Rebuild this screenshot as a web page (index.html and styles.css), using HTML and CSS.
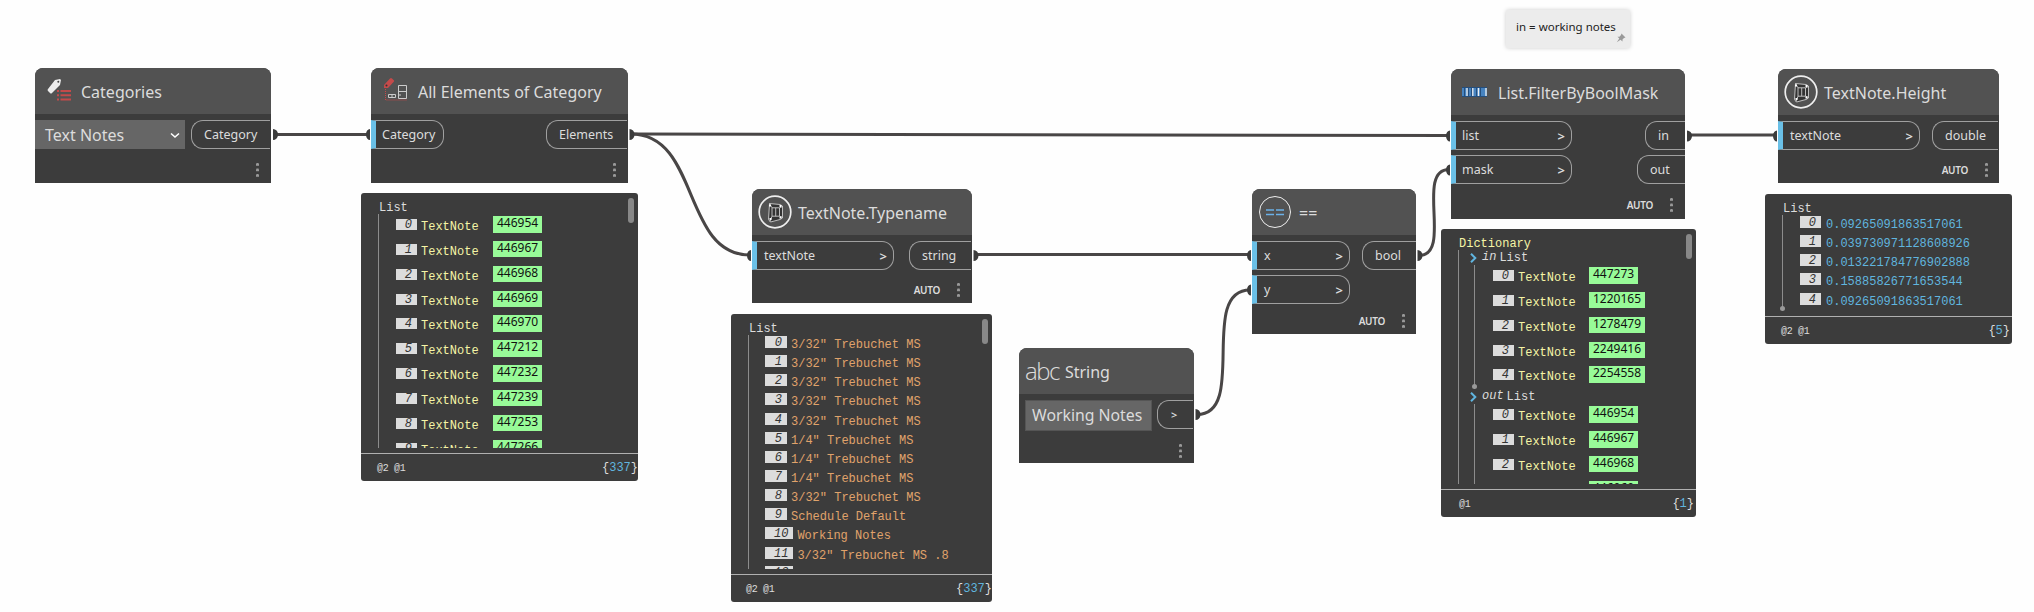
FILE: index.html
```
<!DOCTYPE html>
<html lang="en"><head><meta charset="utf-8"><title>Graph</title><link rel="stylesheet" href="styles.css"></head>
<body><main class="canvas">

<svg class="wires" width="2034" height="612" viewBox="0 0 2034 612">
<g class="wire">
<path d="M273 134.500H369"/>
<path d="M631 134L1449 135.500"/>
<path d="M631 134C700 134 682 255 750 255"/>
<path d="M975 254.500H1250"/>
<path d="M1197 414.500C1248 414.500 1198 290 1250 290"/>
<path d="M1419 255.500C1453 255.500 1415 169.500 1449 169.500"/>
<path d="M1688 135H1776"/>
</g>
<g class="caps">
<path d="M273 129a5 5.500 0 0 1 0 11zM629.500 129a5 5.500 0 0 1 0 11zM973.500 250a5 5.500 0 0 1 0 11zM1195.500 409a5 5.500 0 0 1 0 11zM1417.500 250a5 5.500 0 0 1 0 11zM1687 130.500a5 5.500 0 0 1 0 11z"/>
<path d="M370 129a4 5.500 0 0 0 0 11zM751 250a4 5.500 0 0 0 0 11zM1251 250a4 5.500 0 0 0 0 11zM1251 284.500a4 5.500 0 0 0 0 11zM1450 130.500a4 5.500 0 0 0 0 11zM1450 164.500a4 5.500 0 0 0 0 11zM1777 130.500a4 5.500 0 0 0 0 11z"/>
</g>
</svg>

<aside class="note"><span>in = working notes</span>
<svg class="pin" width="10" height="10" viewBox="0 0 10 10"><path d="M5.500 .5L9.500 4.500L8 5L6.500 6.500V8.500L4.500 6.700L.8 9.300L3.300 5.500L1.500 3.700H3.500L5 2z"/></svg></aside>

<section class="node n-categories">
<header><svg class="icon" width="28" height="28" viewBox="0 0 28 28"><path fill="#ececec" d="M3 12L10 3l5-1 1 1-1 5-8 8q-1 1-2 0l-2-2q-1-1 0-2z"/><circle cx="13.300" cy="4.700" r="1" fill="#444"/><path stroke="#c44a4a" stroke-width="2" d="M12 14h2M15.500 14H26M12 18.300h2M15.500 18.300H26M12 22.600h2M15.500 22.600H26"/></svg><h2>Categories</h2></header>
<div class="ports"><div class="select"><span>Text Notes</span><svg width="10" height="7" viewBox="0 0 10 7"><path d="M1 1.500L5 5L9 1.500"/></svg></div><div class="out"><span>Category</span></div></div>
<footer><i class="dots"></i></footer></section>

<section class="node n-elements">
<header><svg class="icon" width="28" height="28" viewBox="0 0 28 28"><path fill="#c44a4a" d="M3 8L9 1.500q1-1 2 0l2 2q.5.500 0 1L7 11H3z"/><circle cx="5.500" cy="8.500" r="1" fill="#333"/><path fill="none" stroke="#c44a4a" stroke-dasharray="1 1" d="M4.500 12v11H26"/><g fill="none" stroke="#ccc"><path d="M17.500 8.500h8v13h-8zM17.500 14.500h8M7.500 17.500h7v3h-7zM11 17.500v3"/><path d="M19 17v2"/></g></svg><h2>All Elements of Category</h2></header>
<div class="ports"><div class="in"><span>Category</span></div><div class="out"><span>Elements</span></div></div>
<footer><i class="dots"></i></footer></section>

<section class="preview p-elements"><div class="body"><p class="root">List</p><ul class="ids">
<li><i>0</i><b>TextNote</b><a>446954</a></li><li><i>1</i><b>TextNote</b><a>446967</a></li><li><i>2</i><b>TextNote</b><a>446968</a></li><li><i>3</i><b>TextNote</b><a>446969</a></li><li><i>4</i><b>TextNote</b><a>446970</a></li><li><i>5</i><b>TextNote</b><a>447212</a></li><li><i>6</i><b>TextNote</b><a>447232</a></li><li><i>7</i><b>TextNote</b><a>447239</a></li><li><i>8</i><b>TextNote</b><a>447253</a></li><li><i>9</i><b>TextNote</b><a>447266</a></li></ul></div>
<span class="thumb"></span><footer><span class="levels">@2 @1</span><span class="count">{<em>337</em>}</span></footer></section>

<section class="node n-typename">
<header><svg class="icon" width="34" height="34" viewBox="0 0 34 34"><use href="#pkg"/></svg><h2>TextNote.Typename</h2></header>
<div class="ports"><div class="in"><span>textNote</span><span class="gt">&gt;</span></div><div class="out"><span>string</span></div></div>
<footer><span class="auto">AUTO</span><i class="dots"></i></footer></section>

<section class="preview p-typename"><div class="body"><p class="root">List</p><ul class="strings">
<li><i>0</i><b>3/32" Trebuchet MS</b></li><li><i>1</i><b>3/32" Trebuchet MS</b></li><li><i>2</i><b>3/32" Trebuchet MS</b></li><li><i>3</i><b>3/32" Trebuchet MS</b></li><li><i>4</i><b>3/32" Trebuchet MS</b></li><li><i>5</i><b>1/4" Trebuchet MS</b></li><li><i>6</i><b>1/4" Trebuchet MS</b></li><li><i>7</i><b>1/4" Trebuchet MS</b></li><li><i>8</i><b>3/32" Trebuchet MS</b></li><li><i>9</i><b>Schedule Default</b></li><li><i>10</i><b>Working Notes</b></li><li><i>11</i><b>3/32" Trebuchet MS .8</b></li><li><i>12</i><b>3/32" Trebuchet MS</b></li></ul></div>
<span class="thumb"></span><footer><span class="levels">@2 @1</span><span class="count">{<em>337</em>}</span></footer></section>

<section class="node n-string">
<header><span class="abc">abc</span><h2>String</h2></header>
<div class="ports"><div class="field">Working Notes</div><div class="out"><span class="gt">&gt;</span></div></div>
<footer><i class="dots"></i></footer></section>

<section class="node n-equal">
<header><svg class="icon" width="34" height="34" viewBox="0 0 34 34"><circle cx="17" cy="17" r="15.500" fill="none" stroke="#eee"/><path stroke="#6bb1e8" stroke-width="1.300" d="M8 15h8M18 15h8M8 19.500h8M18 19.500h8"/></svg><h2>==</h2></header>
<div class="ports"><div class="stack"><div class="in"><span>x</span><span class="gt">&gt;</span></div><div class="in"><span>y</span><span class="gt">&gt;</span></div></div><div class="out"><span>bool</span></div></div>
<footer><span class="auto">AUTO</span><i class="dots"></i></footer></section>

<section class="node n-filter">
<header><svg class="icon" width="25" height="10" viewBox="0 0 25 10"><path fill="#4683c0" d="M0 .5h25v9H0z"/><path stroke="#254e7c" d="M0 .5h25M0 9.500h25M2.500 1v8M6.500 1v8M9.500 1v8M14.500 1v8M18.500 1v8"/><path stroke="#eee" stroke-width="1.300" d="M5 1v8M10.800 1v8M16.500 1v8M24 1v8"/></svg><h2>List.FilterByBoolMask</h2></header>
<div class="ports"><div class="stack"><div class="in"><span>list</span><span class="gt">&gt;</span></div><div class="in"><span>mask</span><span class="gt">&gt;</span></div></div><div class="stack right"><div class="out"><span>in</span></div><div class="out"><span>out</span></div></div></div>
<footer><span class="auto">AUTO</span><i class="dots"></i></footer></section>

<section class="preview p-filter"><div class="body"><p class="root">Dictionary</p><div class="tree">
<p class="key"><svg width="7" height="10" viewBox="0 0 7 10"><path d="M1 .8L5.300 5L1 9.200"/></svg><i>in</i>List</p><ul class="ids end"><li><i>0</i><b>TextNote</b><a>447273</a></li><li><i>1</i><b>TextNote</b><a>1220165</a></li><li><i>2</i><b>TextNote</b><a>1278479</a></li><li><i>3</i><b>TextNote</b><a>2249416</a></li><li><i>4</i><b>TextNote</b><a>2254558</a></li></ul>
<p class="key"><svg width="7" height="10" viewBox="0 0 7 10"><path d="M1 .8L5.300 5L1 9.200"/></svg><i>out</i>List</p><ul class="ids"><li><i>0</i><b>TextNote</b><a>446954</a></li><li><i>1</i><b>TextNote</b><a>446967</a></li><li><i>2</i><b>TextNote</b><a>446968</a></li><li><a class="last">446969</a></li></ul></div></div>
<span class="thumb"></span><footer><span class="levels">@1</span><span class="count">{<em>1</em>}</span></footer></section>

<section class="node n-height">
<header><svg class="icon" width="34" height="34" viewBox="0 0 34 34"><g id="pkg"><circle cx="17" cy="17" r="15.800" fill="none" stroke="#eee" stroke-width="1.700"/><path fill="#333" stroke="#ccc" stroke-width=".9" d="M11.500 8.500L22 9.500l2.500 1.500v12L22 24.500L12.500 27L10.500 24.500z"/><path fill="none" stroke="#ccc" stroke-width=".9" d="M14 12.800h7.500v8.400H14zM17.700 12.800v8.400M11.500 8.500l2.500 4.300M24.500 11.500l-3 1.500M24.500 22.500l-3-1.500M12 26.500l2-5.300"/><path stroke="#fff" stroke-width="2" d="M11 10.500h2M21.500 11h2M11.500 24h2M21.500 22.500h2"/></g></svg><h2>TextNote.Height</h2></header>
<div class="ports"><div class="in"><span>textNote</span><span class="gt">&gt;</span></div><div class="out"><span>double</span></div></div>
<footer><span class="auto">AUTO</span><i class="dots"></i></footer></section>

<section class="preview p-height"><div class="body"><p class="root">List</p><ul class="numbers end"><li><i>0</i><b>0.09265091863517061</b></li><li><i>1</i><b>0.039730971128608926</b></li><li><i>2</i><b>0.013221784776902888</b></li><li><i>3</i><b>0.15885826771653544</b></li><li><i>4</i><b>0.09265091863517061</b></li></ul></div>
<footer><span class="levels">@2 @1</span><span class="count">{<em>5</em>}</span></footer></section>
</main></body></html>
```
FILE: styles.css
```
*{box-sizing:border-box}
body{margin:0;background:#fefefe;font-family:"Noto Sans","Open Sans",sans-serif;color:#dcdcdc}
h2,p,ul{margin:0;padding:0;font-weight:400;list-style:none}
.canvas{position:relative;width:2034px;height:612px;overflow:hidden}
.wires{position:absolute;left:0;top:0}
.wire{fill:none;stroke:#494646;stroke-width:3}
.caps{fill:#3c3c3c}

/* Nodes */
.node{position:absolute;display:flex;flex-direction:column;height:115px;background:#3c3c3c;border-radius:8px 8px 0 0;overflow:hidden;white-space:nowrap}
.node header{display:flex;align-items:center;height:46px;flex:none;background:#525252}
.node h2{font-size:16px;line-height:24px;padding-top:1px}
.icon{flex:none}
.ports{display:flex;justify-content:space-between;margin-top:6px;flex:none}
.stack{display:flex;flex-direction:column;gap:5px}
.right{align-items:flex-end}
.in,.out{height:29px;display:flex;align-items:center;justify-content:space-between;border:1px solid #a0a0a0;font-size:12.500px;line-height:18px}
.in{border-left:5px solid #6ac0e7;border-radius:0 12px 12px 0;padding:0 6px 0 7px}
.out{border-right:0;border-radius:12px 0 0 12px;padding-left:12px}
.gt{font-size:13px;font-weight:600}
.node footer{display:flex;align-items:center;justify-content:flex-end;flex:1;padding:7px 12px 0 0;gap:17px}
.auto{font-size:10px;font-weight:600;line-height:14px;letter-spacing:-.3px}
.dots{width:3px;height:14px;background:radial-gradient(circle at 1.500px 1.500px,#999 1.300px,transparent 1.700px) 0 0/3px 5.500px}

.n-categories{left:35px;top:68px;width:236px}
.n-categories header{padding-left:10px;gap:8px}
.n-categories .out{width:79px;margin-right:1px}
.select{width:150px;height:29px;background:#666;display:flex;align-items:center;justify-content:space-between;padding:1px 5px 0 10px;font-size:16px}
.select svg{fill:none;stroke:#fff;stroke-width:1.600}
.n-elements{left:371px;top:68px;width:257px}
.n-elements header{padding-left:10px;gap:9px}
.n-elements .in{width:73px;padding-left:6px}
.n-elements .out{width:81px;margin-right:1px}
.n-typename{left:752px;top:189px;width:220px;height:114px}
.n-typename header,.n-height header{padding-left:6px;gap:6px}
.n-typename .in{width:142px}
.n-typename .out{width:62px;margin-right:1px}
.n-string{left:1019px;top:348px;width:175px}
.n-string header{padding-left:6px;gap:6px}
.abc{font:24px/30px "Open Sans",sans-serif;font-weight:300;letter-spacing:-1.500px}
.field{width:127px;height:31px;margin-left:6px;border:1px solid #555;background:#666;font-size:15.800px;line-height:28px;padding-left:6px}
.n-string .out{width:36px;margin-right:1px;padding-left:13px}
.n-string .gt{font-size:11px}
.n-equal{left:1252px;top:189px;width:164px;height:145px}
.n-equal header{padding-left:6px;gap:7px}
.n-equal .in{width:98px}
.n-equal .out{width:54px}
.n-equal footer{padding:4px 11px 0 0}
.n-filter{left:1451px;top:69px;width:234px;height:150px}
.n-filter header{padding-left:11px;gap:11px}
.n-filter .in{width:121px;padding-left:6px}
.n-filter .out{width:40px}
.n-filter .out + .out{width:48px}
.n-height{left:1778px;top:69px;width:221px;height:114px}
.n-height .in{width:142px}
.n-height .out{width:66px;margin-right:1px}
.n-height footer{padding-right:11px}

/* Note */
.note{position:absolute;left:1506px;top:10px;width:124px;height:38px;padding:8px 0 0 10px;background:#ececec;border-radius:2px;box-shadow:0 0 4px #ccc;color:#222;font-size:11.500px;line-height:18px;white-space:nowrap}
.pin{position:absolute;right:4px;bottom:5px;fill:#999}

/* Value previews */
.preview{position:absolute;height:288px;display:flex;flex-direction:column;background:#3c3c3c;border-radius:3px;font:12px/14px "Liberation Mono",monospace;white-space:nowrap}
.body{flex:1;min-height:0;margin-bottom:5px;padding:7px 0 0 17px;overflow:hidden}
.preview footer{height:28px;flex:none;border-top:1px solid #b0b0b0;display:flex;align-items:center;justify-content:space-between;padding-left:16px}
.levels{font-size:10px;letter-spacing:-.3px;margin-top:2px}
.count em{font-style:normal;color:#60b5df}
.thumb{position:absolute;right:4px;top:5px;width:6px;height:25px;border-radius:3px;background:#888}
.root{padding-left:1px;height:14px;line-height:16px}
.preview ul{position:relative;border-left:1px solid #8c8c8c;padding-left:17px}
.preview li{display:flex;align-items:flex-start;height:19.150px;padding-top:1px}
.preview li i{width:21px;height:12px;flex:none;background:#dcdcdc;color:#333;line-height:14px;text-align:right;padding-right:5px;margin-right:5px}
.preview b{font-weight:400;margin-top:2px}
.preview .ids li{height:24.850px;padding-top:2px}
.preview .ids i{height:11px;margin:3px 4px 0 0;line-height:13px}
.preview .ids b{color:#f5f5a6;margin-top:4px;width:72px}
.ids a{background:#98fb98;color:#111;height:16.500px;padding:0 4px;font:12px/14px "Noto Sans",sans-serif}
.ids .last{margin-left:96px}
.strings b{color:#e0a36b}
.numbers b{color:#60b5df}
.end::after{content:"";position:absolute;left:-3px;bottom:0;width:5px;height:5px;border-radius:50%;background:#999}
.p-elements{left:361px;top:193px;width:277px}
.p-typename{left:731px;top:314px;width:261px}
.p-typename footer{padding-left:15px}
.p-typename ul{padding-left:16px}
.preview .strings i{width:auto;min-width:22px;padding-left:9px;margin-right:4px}
.p-filter{left:1441px;top:229px;width:255px}
.p-filter .root{color:#f5f5a6}
.p-filter footer{padding:0 2px 0 18px}
.tree{border-left:1px solid #8c8c8c;padding-left:11px}
.tree ul{margin-left:4px;padding-left:18px}
.preview .tree b{width:71px}
.key{height:15px;padding-top:1px;display:flex;align-items:center}
.key i{margin:-2px 3px 0 5px}
.key svg{fill:none;stroke:#60b5df;stroke-width:2}
.p-height{left:1765px;top:194px;width:247px;height:150px}
.p-height footer{padding:0 2px 0 16px}
```
